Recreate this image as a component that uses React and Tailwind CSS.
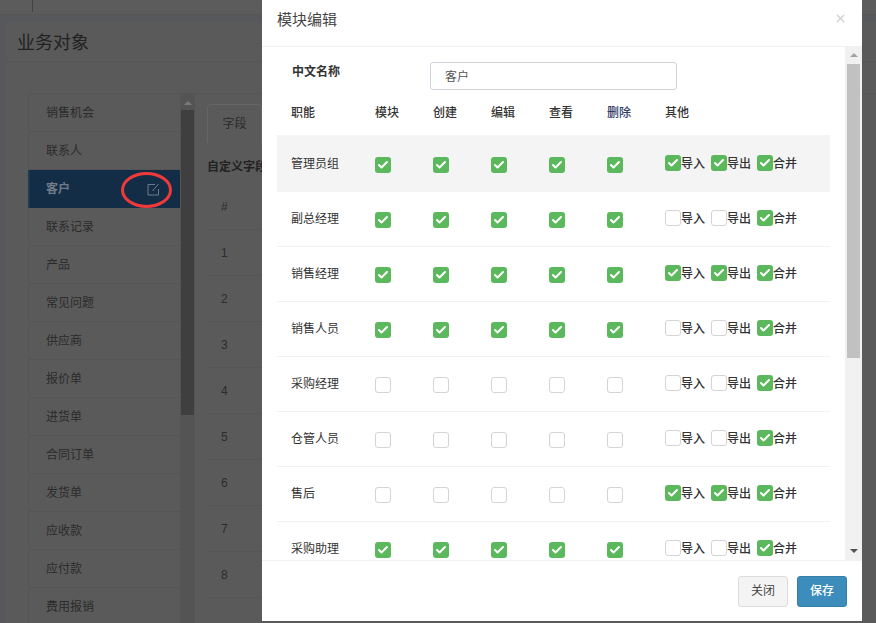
import React from "react"
import { Check, X } from "lucide-react"

const menu = ["销售机会", "联系人", "客户", "联系记录", "产品", "常见问题", "供应商", "报价单", "进货单", "合同订单", "发货单", "应收款", "应付款", "费用报销"]

// 模块 创建 编辑 查看 删除 | 导入 导出 合并
const roles = [
  { name: "管理员组", mods: true, imp: true, exp: true },
  { name: "副总经理", mods: true, imp: false, exp: false },
  { name: "销售经理", mods: true, imp: true, exp: true },
  { name: "销售人员", mods: true, imp: false, exp: false },
  { name: "采购经理", mods: false, imp: false, exp: false },
  { name: "仓管人员", mods: false, imp: false, exp: false },
  { name: "售后", mods: false, imp: true, exp: true },
  { name: "采购助理", mods: true, imp: false, exp: false },
]

function Box({ on }) {
  if (on) {
    return (
      <span className="flex h-4 w-4 shrink-0 items-center justify-center rounded-[3px] bg-[#5cb85c]">
        <Check size={12} strokeWidth={4} className="text-white" />
      </span>
    )
  }
  return <span className="block h-4 w-4 shrink-0 rounded-[3px] border border-[#d4d4d4] bg-white"></span>
}

function Other({ on, label }) {
  return (
    <span className="flex w-[46px] items-center">
      <Box on={on} />
      <span className="relative top-px font-medium whitespace-nowrap text-[#333]">{label}</span>
    </span>
  )
}

function Background() {
  return (
    <div className="h-[623px] w-[876px] overflow-hidden bg-[#56585b] text-[12px] text-[#2b2b2b]">
      <div className="h-[15px] border-b border-[#565656] bg-[#5c5c5c] pl-[32px]">
        <div className="h-[12px] w-px bg-[#444]"></div>
      </div>
      <div className="ml-[7px] mt-[7px] h-full bg-[#5a5a5a]">
        <div className="flex h-[40px] items-center border-b border-[#555] pl-[10px] pt-[3px] text-[18px] text-[#222]">业务对象</div>
        <div className="ml-[21px] mt-[31px] flex border-t border-[#555]">
          <div className="w-[152px]">
            {menu.map((item) => (
              <div
                key={item}
                className={
                  item === "客户"
                    ? "flex h-[38px] items-center justify-between border-l-2 border-[#1a3a55] bg-[#142d47] pl-[16px] pr-[20px] font-bold text-[#6f7c88]"
                    : "flex h-[38px] items-center border-b border-l border-[#555] pl-[17px]"
                }
              >
                {item}
                {item === "客户" && (
                  <svg width="13" height="13" viewBox="0 0 13 13" fill="none" stroke="#6f7c88" strokeWidth="1">
                    <path d="M8 1.500H1v10.500h10.500V6" />
                    <path d="M5.500 8l6-7" />
                  </svg>
                )}
              </div>
            ))}
          </div>
          <div className="flex h-[530px] w-[15px] flex-col items-center bg-[#545454]">
            <div className="mt-[7px] h-0 w-0 border-x-[4px] border-b-[4px] border-x-transparent border-b-[#7a7a7a]"></div>
            <div className="mt-[5px] h-[305px] w-[13px] bg-[#3f3f3f]"></div>
          </div>
          <div className="ml-[12px] flex-1 pt-[10px]">
            <div className="flex h-[39px] w-[55px] items-center justify-center rounded-t border-x border-t border-[#666] text-[#2b2b2b]">字段</div>
            <div className="mt-[15px] font-bold text-[#222]">自定义字段</div>
            <div className="mt-[8px] w-[60px]">
              <div className="flex h-[46px] items-center border-b border-[#555] pl-[14px]">#</div>
              {[1, 2, 3, 4, 5, 6, 7, 8].map((n) => (
                <div key={n} className="flex h-[46px] items-center border-b border-[#555] pl-[14px]">{n}</div>
              ))}
            </div>
            <div className="mt-[23px] font-bold text-[#222]">系统标准字段</div>
          </div>
        </div>
      </div>
    </div>
  )
}

export default function App() {
  return (
    <div className="relative h-[623px] w-[876px] overflow-hidden font-['Liberation_Sans','Noto_Sans_CJK_SC',sans-serif]">
      <Background />

      {/* 客户 edit marker */}
      <div className="absolute left-[121px] top-[172px] h-[36px] w-[51px] rounded-[50%] border-[3px] border-[#f03a3a]"></div>

      {/* Modal */}
      <div className="absolute left-[262px] top-0 flex h-[621px] w-[600px] flex-col bg-white text-[12px] text-[#333]">
        <div className="flex h-[47px] shrink-0 items-center justify-between border-b border-[#f0f0f0] pb-[5px] pl-[15px] pr-[15px]">
          <span className="text-[15px] text-[#444]">模块编辑</span>
          <X size={13} strokeWidth={2.200} className="mb-[4px] text-[#cfcfcf]" />
        </div>

        <div className="flex h-[513px] shrink-0">
          <div className="flex-1 overflow-hidden pl-[15px] pr-[15px]">
            <div className="flex items-start pl-[15px] pt-[15px]">
              <span className="w-[138px] pt-px font-bold">中文名称</span>
              <div className="flex h-[28px] w-[247px] items-center rounded-[3px] border border-[#cdd2dc] pl-[14px] pt-px text-[#555]">客户</div>
            </div>

            <div className="mt-[14px] grid h-[31px] grid-cols-[84px_58px_58px_58px_58px_58px_1fr] items-start pl-[14px] font-medium">
              <span>职能</span>
              <span>模块</span>
              <span>创建</span>
              <span>编辑</span>
              <span>查看</span>
              <span className="text-[#2f3a6b]">删除</span>
              <span>其他</span>
            </div>

            {roles.map((role, i) => (
              <div
                key={role.name}
                className={
                  i === 0
                    ? "grid h-[57px] grid-cols-[84px_58px_58px_58px_58px_58px_1fr] items-center bg-[#f4f4f4] pl-[14px]"
                    : "grid h-[55px] grid-cols-[84px_58px_58px_58px_58px_58px_1fr] items-center border-b border-[#f2f2f2] pl-[14px]"
                }
              >
                <span>{role.name}</span>
                {[0, 1, 2, 3, 4].map((c) => (
                  <span key={c} className="relative top-px">
                    <Box on={role.mods} />
                  </span>
                ))}
                <div className="relative -top-px flex">
                  <Other on={role.imp} label="导入" />
                  <Other on={role.exp} label="导出" />
                  <Other on={true} label="合并" />
                </div>
              </div>
            ))}
          </div>

          {/* scrollbar */}
          <div className="flex w-[17px] shrink-0 flex-col items-center bg-[#f1f1f1]">
            <div className="mt-[6px] h-0 w-0 border-x-[4px] border-b-[4px] border-x-transparent border-b-[#a3a3a3]"></div>
            <div className="mt-[7px] h-[294px] w-[13px] bg-[#c1c1c1]"></div>
            <div className="mt-auto mb-[7px] h-0 w-0 border-x-[4px] border-t-[4px] border-x-transparent border-t-[#505050]"></div>
          </div>
        </div>

        <div className="flex flex-1 items-center justify-end gap-[9px] border-t border-[#f0f0f0] pr-[15px]">
          <button className="h-[31px] w-[50px] rounded-[3px] border border-[#ddd] bg-[#f4f4f4] text-[#444]">关闭</button>
          <button className="h-[31px] w-[50px] rounded-[3px] border border-[#367fa9] bg-[#3c8dbc] font-medium text-white">保存</button>
        </div>
      </div>
    </div>
  )
}
